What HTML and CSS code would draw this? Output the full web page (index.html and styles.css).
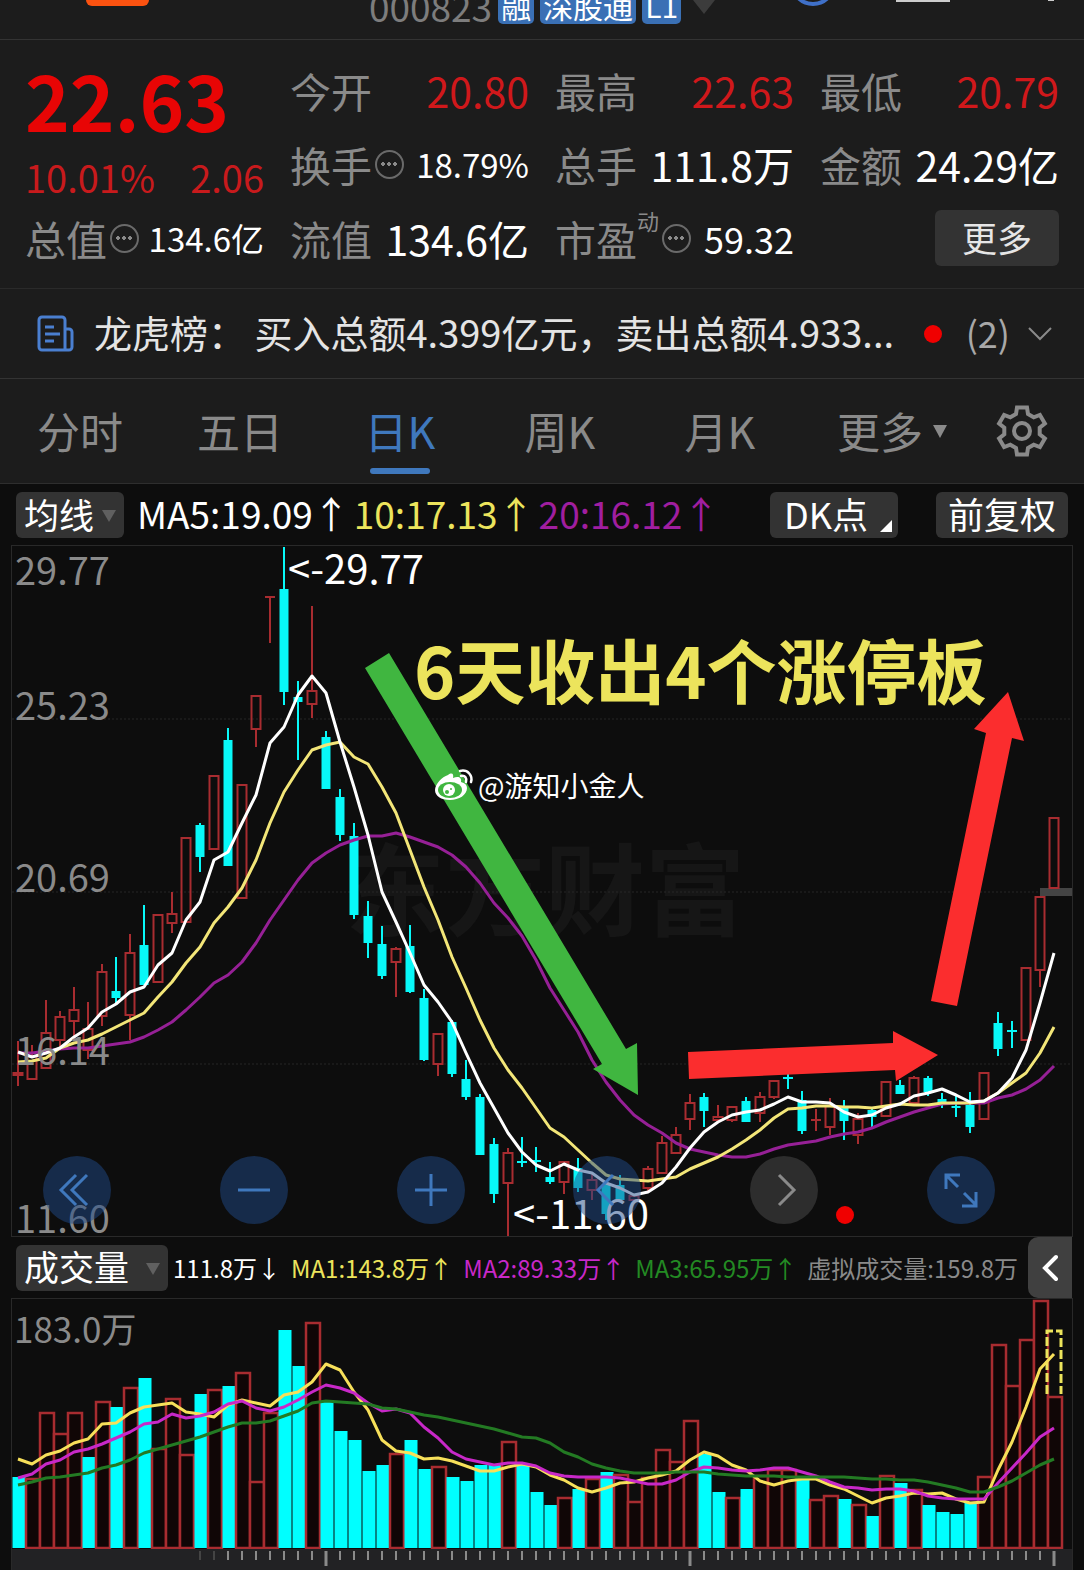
FILE: index.html
```html
<!DOCTYPE html>
<html lang="zh-CN">
<head>
    <meta charset="UTF-8">
    <meta name="viewport" content="width=device-width, initial-scale=1.0">
    <title>000823 日K</title>
    <link rel="stylesheet" href="styles.css">
</head>
<body>
    <!-- Title bar -->
    <header class="topbar">
        <div class="topbar-left"><span class="app-mark"></span></div>
        <div class="stock-code">
            <span>000823</span>
            <span class="tag">融</span>
            <span class="tag">深股通</span>
            <span class="tag">L1</span>
            <span class="code-arrow"></span>
        </div>
        <div class="topbar-right">
            <span class="ring"></span>
            <span class="bar"></span>
            <span class="tip"></span>
        </div>
    </header>

    <!-- Quote -->
    <section class="quote">
        <div class="price-box">
            <div class="price">22.63</div>
            <div class="change"><span>10.01%</span><span>2.06</span></div>
        </div>
        <div class="cell"><span class="label">今开</span><span class="up">20.80</span></div>
        <div class="cell"><span class="label">最高</span><span class="up">22.63</span></div>
        <div class="cell"><span class="label">最低</span><span class="up">20.79</span></div>
        <div class="cell"><span class="label">换手<i class="info"></i></span><span class="small">18.79%</span></div>
        <div class="cell"><span class="label">总手</span><span>111.8万</span></div>
        <div class="cell"><span class="label">金额</span><span>24.29亿</span></div>
        <div class="cell"><span class="label">总值<i class="info"></i></span><span class="small">134.6亿</span></div>
        <div class="cell"><span class="label">流值</span><span>134.6亿</span></div>
        <div class="cell"><span class="label">市盈<sup>动</sup><i class="info"></i></span><span class="medium">59.32</span></div>
        <div class="cell cell-end"><button class="more-btn">更多</button></div>
    </section>

    <!-- News line -->
    <section class="news">
        <svg class="news-icon" viewBox="0 0 38 38" fill="none" stroke="#4a7fd0" stroke-width="3">
            <path d="M29 35H6a3 3 0 0 1-3-3V5a3 3 0 0 1 3-3h20a3 3 0 0 1 3 3v30h4a3 3 0 0 0 3-3V17a3 3 0 0 0-3-3h-4" />
            <path d="M9 12h9M9 19h15M9 26h9" />
        </svg>
        <span class="news-text">龙虎榜： 买入总额4.399亿元，卖出总额4.933...</span>
        <span class="news-dot"></span>
        <span class="news-count">(2)</span>
        <svg class="news-chevron" viewBox="0 0 24 14" fill="none" stroke="#8a8a8a" stroke-width="2">
            <path d="M1 1l11 11L23 1" />
        </svg>
    </section>

    <!-- Period tabs -->
    <nav class="tabs">
        <button class="tab">分时</button>
        <button class="tab">五日</button>
        <button class="tab active">日K</button>
        <button class="tab">周K</button>
        <button class="tab">月K</button>
        <span class="tab tab-more">
            <select aria-label="更多周期"><option>更多</option></select>
        </span>
        <button class="gear" aria-label="设置">
            <svg viewBox="0 0 52 52" fill="none" stroke="#8a8a8a" stroke-width="4">
                <path d="M20 9L21 2.500H31L32 9 37.700 12.300 43.900 9.900 48.900 18.600 43.700 22.700V29.300L48.900 33.400 43.900 42.100 37.700 39.700 32 43 31 49.500H21L20 43 14.300 39.700 8.100 42.100 3.100 33.400 8.300 29.300V22.700L3.100 18.600 8.100 9.900 14.300 12.300Z" />
                <circle cx="26" cy="26" r="8" />
            </svg>
        </button>
    </nav>

    <main class="charts">
        <div class="ma-row">
            <span class="picker picker-ma">
                <select aria-label="主图指标"><option>均线</option></select>
            </span>
            <div class="ma-values">
                <span>MA5:19.09↑</span>
                <span class="yellow">10:17.13↑</span>
                <span class="purple">20:16.12↑</span>
            </div>
            <button class="chip dk">DK点</button>
            <button class="chip">前复权</button>
        </div>

        <div class="panel">
            <svg id="kline" class="chart" viewBox="12 546 1060 690">
                <text class="watermark" x="545" y="928" text-anchor="middle">东方财富</text>
                <g class="grid">
                    <path d="M12 719H1072M12 892H1072M12 1064H1072" />
                </g>
                <rect x="1040" y="888" width="32" height="8" fill="#444" />
                <g id="candles"></g>
                <g id="maLines"></g>
                <g class="axis">
                    <text x="15" y="585">29.77</text>
                    <text x="15" y="720">25.23</text>
                    <text x="15" y="892">20.69</text>
                    <text x="15" y="1065">16.14</text>
                    <text x="15" y="1233">11.60</text>
                </g>
                <g class="extreme">
                    <text x="288" y="584">&lt;-29.77</text>
                    <text x="513" y="1229">&lt;-11.60</text>
                </g>
                <!-- trend arrows -->
                <path fill="#40b640" d="M365 668L389 653 626 1049 637 1043 638 1095 593 1069 602 1064Z" />
                <path fill="#fb2d2e" d="M688 1052L893 1043V1031L938 1055 896 1081 895 1070 689 1079Z" />
                <path fill="#fb2d2e" d="M931 1001L986 733 974 729 1008 692 1024 741 1012 738 957 1006Z" />
                <text class="headline" x="414" y="699">6天收出4个涨停板</text>
                <!-- account mark -->
                <g transform="translate(435 768)">
                    <path fill="#fff" d="M13 7c4-3 6-1 5 3 5-2 9-1 8 4 4 1 6 3 6 6 0 7-8 12-17 12C6 32 0 28 0 22 0 16 7 9 13 7z" />
                    <ellipse cx="15" cy="22" rx="12" ry="8" fill="#40b640" />
                    <circle cx="14" cy="22" r="6" fill="#fff" />
                    <circle cx="12" cy="24" r="2" fill="#40b640" />
                    <circle cx="16" cy="21" r="1" fill="#40b640" />
                    <path fill="none" stroke="#fff" stroke-width="2.5" stroke-linecap="round" d="M26 8c4-1 6 2 5 6M25 3c8-2 13 5 11 11" />
                </g>
                <text class="account" x="478" y="797">@游知小金人</text>
            </svg>

            <div class="toolbar">
                <button class="round" aria-label="最左"><svg viewBox="0 0 68 68"><path d="M33 19L18 34l15 15M44 19L29 34l15 15" /></svg></button>
                <button class="round" aria-label="缩小"><svg viewBox="0 0 68 68"><path d="M18 34h32" /></svg></button>
                <button class="round" aria-label="放大"><svg viewBox="0 0 68 68"><path d="M18 34h32M34 18v32" /></svg></button>
                <button class="round" aria-label="向左"><svg viewBox="0 0 68 68"><path d="M40 19L25 34l15 15" /></svg></button>
                <button class="round grey" aria-label="向右"><svg viewBox="0 0 68 68"><path d="M29 19l15 15-15 15" /></svg><span class="badge"></span></button>
                <button class="round" aria-label="全屏"><svg viewBox="0 0 68 68"><path d="M31 31L19 19M33 19H19v14M37 37l12 12M49 36v14H35" /></svg></button>
            </div>
        </div>

        <div class="vol-row">
            <span class="picker picker-vol">
                <select aria-label="副图指标"><option>成交量</option></select>
            </span>
            <div class="vol-values">
                <span>111.8万↓</span>
                <span class="yellow">MA1:143.8万↑</span>
                <span class="magenta">MA2:89.33万↑</span>
                <span class="green">MA3:65.95万↑</span>
                <span class="grey-text">虚拟成交量:159.8万</span>
            </div>
            <button class="fold" aria-label="收起">
                <svg viewBox="0 0 16 28" fill="none" stroke="#fff" stroke-width="4" stroke-linecap="round"><path d="M14 3L3 14l11 11" /></svg>
            </button>
        </div>

        <div class="panel">
            <svg id="volume" class="chart" viewBox="12 1299 1060 271">
                <g id="bars"></g>
                <path d="M1047 1394V1331H1061V1394" fill="none" stroke="#ece45c" stroke-width="3" stroke-dasharray="9 3" />
                <g id="volLines"></g>
                <g class="axis"><text class="vol-max" x="14" y="1343">183.0万</text></g>
                <rect x="12" y="1549" width="1060" height="21" fill="#222224" />
                <g id="ticks"></g>
            </svg>
        </div>
    </main>

    <script src="script.js"></script>
</body>
</html>
```

FILE: styles.css
```css
* {
    box-sizing: border-box;
}

body {
    margin: 0;
    background-color: #1c1c1c;
    color: #fff;
    font-family: "Noto Sans CJK SC", sans-serif;
}

button,
select {
    margin: 0;
    padding: 0;
    border: none;
    background: none;
    color: inherit;
    font-family: inherit;
    cursor: pointer;
    appearance: none;
}

/* title bar */
.topbar {
    display: grid;
    grid-template-columns: 1fr auto 1fr;
    align-items: end;
    height: 40px;
    overflow: hidden;
    border-bottom: 1px solid #333;
}

.topbar-left {
    display: flex;
    height: 39px;
    padding-left: 86px;
}

.app-mark {
    width: 63px;
    height: 6px;
    border-radius: 0 0 12px 12px;
    background-color: #fb5210;
}

.stock-code {
    display: flex;
    align-items: flex-end;
    gap: 6px;
    height: 39px;
    padding-bottom: 15px;
    color: #7d7d7d;
    font-size: 37px;
    line-height: 36px;
}

.tag {
    padding: 0 3px;
    border-radius: 5px;
    background-color: #3a70b5;
    color: #fff;
    font-size: 30px;
    line-height: 38px;
}

.code-arrow {
    align-self: flex-start;
    margin-left: 6px;
    border: 11px solid transparent;
    border-top: 14px solid #3c3c3c;
    border-bottom: none;
}

.topbar-right {
    display: flex;
    align-items: flex-start;
    justify-content: flex-end;
    height: 39px;
    padding-right: 30px;
    gap: 60px;
}

.ring {
    width: 46px;
    height: 46px;
    margin-top: -40px;
    border: 4px solid #3f70c8;
    border-radius: 50%;
}

.bar {
    width: 54px;
    height: 2px;
    background-color: #ccc;
}

.tip {
    width: 6px;
    height: 1px;
    margin-left: 38px;
    background-color: #ccc;
}

/* quote */
.quote {
    display: grid;
    grid-template-columns: repeat(4, 1fr);
    grid-auto-rows: 74px;
    column-gap: 26px;
    padding: 13px 25px;
    border-bottom: 1px solid #2a2a2a;
    font-size: 41px;
}

.price-box {
    grid-row: span 2;
}

.price {
    color: #e80505;
    font-size: 76px;
    font-weight: 700;
    line-height: 92px;
}

.change {
    display: flex;
    justify-content: space-between;
    color: #c81a1c;
    font-size: 38px;
    line-height: 64px;
}

.cell {
    display: flex;
    align-items: center;
    justify-content: space-between;
    white-space: nowrap;
}

.cell-end {
    justify-content: flex-end;
}

.label {
    display: flex;
    align-items: center;
    color: #8a8a8a;
}

.label sup {
    align-self: flex-start;
    font-size: 22px;
    line-height: 24px;
}

.up {
    color: #d0181b;
}

.small {
    font-size: 33px;
}

.medium {
    font-size: 36px;
}

.info {
    width: 29px;
    height: 29px;
    margin-left: 3px;
    border: 2px solid #6a6a6a;
    border-radius: 50%;
    background:
        radial-gradient(circle at 6px 12px, #8a8a8a 2px, transparent 2px),
        radial-gradient(circle at 12px 12px, #8a8a8a 2px, transparent 2px),
        radial-gradient(circle at 18px 12px, #8a8a8a 2px, transparent 2px);
}

.more-btn {
    width: 124px;
    height: 56px;
    padding-bottom: 3px;
    border-radius: 6px;
    background-color: #333;
    color: #e6e6e6;
    font-size: 35px;
    line-height: 50px;
}

/* news line */
.news {
    display: flex;
    align-items: center;
    height: 90px;
    padding: 0 32px 0 36px;
    border-bottom: 1px solid #333;
    color: #e4e4e4;
    font-size: 38px;
    line-height: 56px;
}

.news-icon {
    flex: none;
    width: 38px;
    height: 38px;
    margin-right: 20px;
}

.news-text {
    flex: 1;
    padding-bottom: 4px;
    overflow: hidden;
    white-space: nowrap;
}

.news-dot {
    flex: none;
    width: 18px;
    height: 18px;
    border-radius: 50%;
    background-color: #f00000;
}

.news-count {
    margin: 0 18px 0 24px;
    padding-bottom: 4px;
    color: #a8a8a8;
    font-size: 36px;
}

.news-chevron {
    flex: none;
    width: 24px;
    height: 14px;
}

/* period tabs */
.tabs {
    display: flex;
    height: 105px;
    border-bottom: 1px solid #2e2e2e;
}

.tab {
    position: relative;
    flex: 1;
    padding-bottom: 2px;
    color: #8a8a8a;
    font-size: 43px;
}

.tab.active {
    color: #3f78bd;
}

.tab.active::after {
    content: "";
    position: absolute;
    bottom: 9px;
    left: 50%;
    width: 60px;
    height: 6px;
    margin-left: -30px;
    border-radius: 3px;
    background-color: #3f78bd;
}

.tab-more select {
    width: 100%;
    height: 100%;
    font-size: 43px;
    text-align: center;
    text-align-last: center;
}

.tab-more::after {
    content: "";
    position: absolute;
    top: 46px;
    right: 13px;
    border: 7px solid transparent;
    border-top: 13px solid #8a8a8a;
    border-bottom: none;
}

.gear {
    flex: none;
    width: 124px;
}

.gear svg {
    display: block;
    width: 52px;
    height: 52px;
    margin: 0 auto;
}

/* indicator rows */
.charts {
    background-color: #0d0d0d;
}

.ma-row {
    display: flex;
    align-items: center;
    height: 62px;
    padding: 0 16px;
}

.picker {
    position: relative;
    flex: none;
    height: 46px;
    border-radius: 6px;
    background-color: #333;
}

/* taller than the chip so the glyph feet are not clipped */
.picker select {
    display: block;
    width: 100%;
    height: 54px;
    margin-top: -6px;
    padding-left: 8px;
    font-size: 35px;
}

.picker::after {
    content: "";
    position: absolute;
    top: 18px;
    right: 8px;
    border: 7px solid transparent;
    border-top: 12px solid #606060;
    border-bottom: none;
    pointer-events: none;
}

.picker-ma {
    width: 108px;
}

.picker-vol {
    width: 152px;
}

.ma-values {
    display: flex;
    flex: 1;
    gap: 4px;
    padding: 0 0 4px 13px;
    font-size: 37px;
    line-height: 54px;
    white-space: nowrap;
}

.chip {
    position: relative;
    height: 46px;
    padding: 0 12px 4px;
    border-radius: 6px;
    background-color: #333;
    font-size: 36px;
    line-height: 42px;
}

.dk {
    margin-right: 38px;
    padding: 0 30px 4px 14px;
}

.dk::after {
    content: "";
    position: absolute;
    right: 6px;
    bottom: 6px;
    border-left: 12px solid transparent;
    border-bottom: 12px solid #fff;
}

.yellow {
    color: #ece45c;
}

.purple {
    color: #a01ea0;
}

.magenta {
    color: #c828c8;
}

.green {
    color: #238a23;
}

.grey-text {
    color: #8a8a8a;
}

.vol-row {
    display: flex;
    align-items: center;
    height: 63px;
    padding: 0 12px 0 16px;
}

.vol-values {
    display: flex;
    flex: 1;
    justify-content: space-between;
    padding: 0 10px 0 5px;
    font-size: 24px;
    white-space: nowrap;
}

.fold {
    flex: none;
    width: 44px;
    height: 61px;
    border-radius: 10px 0 0 10px;
    background-color: #404040;
}

.fold svg {
    display: block;
    width: 16px;
    height: 28px;
    margin: 0 auto;
}

/* charts */
.panel {
    position: relative;
    margin: 0 12px;
    outline: 1px solid #292929;
}

.chart {
    display: block;
    width: 100%;
    height: auto;
}

.grid path {
    fill: none;
    stroke: #262626;
    stroke-dasharray: 2 2;
}

.watermark {
    fill: #161616;
    font-size: 100px;
    font-weight: 700;
}

.axis text {
    fill: #8a8a8a;
    font-size: 38px;
}

.axis .vol-max {
    font-size: 35px;
}

.extreme text {
    fill: #fff;
    font-size: 40px;
}

.headline {
    fill: #ece45c;
    font-size: 70px;
    font-weight: 700;
}

.account {
    fill: #fff;
    font-size: 28px;
}

.toolbar {
    position: absolute;
    right: 77px;
    bottom: 12px;
    left: 31px;
    display: flex;
    justify-content: space-between;
}

.round {
    position: relative;
    width: 68px;
    height: 68px;
    border-radius: 50%;
    background-color: rgba(31, 73, 135, 0.5);
}

.round svg {
    display: block;
    fill: none;
    stroke: #3f78bd;
    stroke-width: 3;
}

.round.grey {
    background-color: #2d2d2d;
}

.round.grey svg {
    stroke: #8a8a8a;
}

.badge {
    position: absolute;
    right: -36px;
    bottom: 0;
    width: 18px;
    height: 18px;
    border-radius: 50%;
    background-color: #f00000;
}
```

FILE: script.js
```js
const RED = '#a82c30';
const CYAN = '#08f8f8';
const STEP = 14;
const FIRST_X = 18;

// [colour, high, body top, body bottom, low] for each day
const candles = [
    ['r', 1041, 1072, 1075, 1086], ['r', 1045, 1055, 1079, 1079], ['r', 1000, 1032, 1068, 1068],
    ['r', 1011, 1016, 1040, 1046], ['r', 987, 1009, 1021, 1040], ['r', 1002, 1028, 1050, 1059],
    ['r', 964, 971, 1016, 1026], ['c', 957, 991, 998, 1003], ['r', 934, 952, 1015, 1040],
    ['c', 905, 945, 985, 985], ['r', 914, 914, 982, 982], ['r', 892, 913, 923, 933],
    ['r', 837, 837, 922, 922], ['c', 823, 825, 857, 872], ['r', 775, 775, 849, 849],
    ['c', 728, 740, 866, 866], ['r', 784, 784, 898, 898], ['r', 695, 695, 729, 747],
    ['r', 597, 597, 597, 643], ['c', 547, 589, 692, 705], ['c', 681, 697, 702, 760],
    ['r', 606, 690, 704, 718], ['c', 731, 737, 789, 789], ['c', 789, 797, 835, 841],
    ['c', 823, 836, 915, 919], ['c', 901, 916, 943, 958], ['c', 926, 944, 976, 979],
    ['r', 947, 948, 962, 997], ['c', 925, 946, 992, 993], ['c', 989, 998, 1060, 1061],
    ['r', 1033, 1033, 1064, 1076], ['c', 1020, 1022, 1074, 1077], ['c', 1060, 1079, 1097, 1100],
    ['c', 1094, 1097, 1155, 1155], ['c', 1138, 1144, 1194, 1203], ['r', 1148, 1152, 1183, 1237],
    ['c', 1137, 1162, 1162, 1167], ['c', 1147, 1161, 1161, 1172], ['c', 1162, 1177, 1182, 1184],
    ['r', 1161, 1161, 1182, 1194], ['c', 1158, 1168, 1188, 1192], ['r', 1172, 1179, 1190, 1200],
    ['c', 1183, 1185, 1214, 1220], ['c', 1175, 1185, 1200, 1200], ['r', 1195, 1195, 1200, 1200],
    ['r', 1166, 1168, 1188, 1192], ['r', 1136, 1142, 1173, 1173], ['r', 1127, 1134, 1153, 1153],
    ['r', 1094, 1102, 1119, 1130], ['c', 1093, 1097, 1111, 1127], ['r', 1105, 1116, 1120, 1123],
    ['r', 1106, 1106, 1120, 1122], ['c', 1097, 1101, 1122, 1122], ['r', 1092, 1096, 1113, 1122],
    ['r', 1080, 1080, 1097, 1099], ['c', 1074, 1078, 1078, 1089], ['c', 1091, 1100, 1131, 1134],
    ['r', 1109, 1120, 1120, 1131], ['r', 1098, 1105, 1127, 1135], ['c', 1100, 1107, 1121, 1140],
    ['r', 1113, 1118, 1135, 1144], ['c', 1108, 1110, 1117, 1127], ['r', 1081, 1081, 1116, 1116],
    ['c', 1080, 1085, 1094, 1094], ['r', 1076, 1077, 1103, 1103], ['c', 1076, 1078, 1092, 1096],
    ['c', 1093, 1099, 1103, 1108], ['c', 1096, 1106, 1108, 1117], ['c', 1092, 1105, 1127, 1133],
    ['r', 1072, 1072, 1119, 1119], ['c', 1012, 1023, 1049, 1056], ['c', 1021, 1031, 1031, 1048],
    ['r', 967, 967, 1040, 1040], ['r', 896, 896, 970, 987], ['r', 817, 817, 888, 888]
];

const ma5 = [1052, 1057, 1053, 1048, 1037, 1028, 1012, 1004, 992, 987, 965, 953, 920, 902, 860, 852, 823, 795, 743, 727, 695, 676, 693, 742, 787, 835, 892, 922, 953, 985, 1002, 1022, 1053, 1083, 1108, 1133, 1152, 1165, 1171, 1164, 1170, 1173, 1183, 1188, 1195, 1192, 1183, 1167, 1148, 1132, 1122, 1115, 1112, 1110, 1104, 1097, 1102, 1102, 1103, 1112, 1117, 1115, 1108, 1104, 1096, 1093, 1089, 1095, 1102, 1101, 1093, 1078, 1050, 1003, 953];
const ma10 = [1062, 1061, 1058, 1048, 1043, 1040, 1034, 1027, 1020, 1013, 997, 982, 963, 947, 923, 907, 888, 860, 823, 792, 770, 750, 745, 742, 757, 764, 787, 813, 850, 887, 920, 957, 988, 1020, 1048, 1070, 1088, 1108, 1128, 1137, 1150, 1163, 1175, 1179, 1180, 1181, 1179, 1177, 1169, 1163, 1157, 1149, 1140, 1130, 1118, 1109, 1108, 1106, 1106, 1107, 1107, 1108, 1106, 1104, 1105, 1105, 1103, 1103, 1103, 1101, 1093, 1083, 1073, 1053, 1027];
const ma20 = [1053, 1053, 1051, 1049, 1048, 1048, 1046, 1044, 1042, 1037, 1030, 1022, 1010, 997, 983, 975, 962, 943, 920, 900, 880, 863, 853, 845, 840, 836, 836, 833, 837, 842, 847, 855, 867, 883, 903, 918, 936, 960, 988, 1010, 1032, 1060, 1082, 1100, 1115, 1125, 1133, 1143, 1149, 1152, 1155, 1157, 1157, 1154, 1149, 1145, 1143, 1141, 1137, 1134, 1132, 1128, 1122, 1117, 1112, 1108, 1104, 1103, 1103, 1103, 1098, 1095, 1089, 1080, 1066];

const volumeTop = [1477, 1478, 1412, 1433, 1412, 1457, 1401, 1407, 1387, 1378, 1448, 1398, 1454, 1394, 1389, 1386, 1372, 1481, 1412, 1330, 1366, 1322, 1402, 1431, 1440, 1471, 1465, 1453, 1440, 1469, 1466, 1477, 1481, 1465, 1465, 1441, 1464, 1492, 1505, 1497, 1489, 1478, 1472, 1474, 1501, 1477, 1449, 1461, 1420, 1454, 1492, 1497, 1489, 1475, 1469, 1469, 1479, 1499, 1495, 1499, 1504, 1516, 1475, 1483, 1489, 1505, 1512, 1514, 1503, 1476, 1344, 1385, 1339, 1300, 1396];
const volumeColor = 'crrrrcrcrcrrrcrcrrrccrcccccrccrccccrcccrcrcrrrrrrccrcrrrcrrcrcrcrccccrrrrrr';
const vol5 = [1459, 1464, 1455, 1451, 1443, 1439, 1424, 1423, 1413, 1407, 1405, 1403, 1412, 1414, 1417, 1405, 1400, 1403, 1406, 1395, 1392, 1382, 1364, 1370, 1392, 1410, 1440, 1451, 1453, 1459, 1458, 1461, 1466, 1471, 1471, 1467, 1464, 1467, 1475, 1480, 1488, 1492, 1488, 1483, 1482, 1478, 1475, 1471, 1460, 1452, 1456, 1465, 1470, 1481, 1485, 1481, 1479, 1479, 1485, 1489, 1496, 1503, 1498, 1496, 1493, 1494, 1493, 1499, 1503, 1502, 1470, 1442, 1407, 1369, 1354];
const vol10 = [1478, 1474, 1464, 1460, 1452, 1449, 1444, 1438, 1432, 1424, 1422, 1414, 1418, 1416, 1412, 1404, 1401, 1408, 1411, 1407, 1400, 1392, 1385, 1388, 1393, 1403, 1411, 1409, 1413, 1427, 1438, 1452, 1459, 1462, 1465, 1463, 1463, 1466, 1473, 1476, 1477, 1477, 1477, 1478, 1481, 1484, 1484, 1480, 1472, 1467, 1468, 1470, 1471, 1470, 1468, 1468, 1472, 1476, 1482, 1487, 1488, 1490, 1489, 1489, 1491, 1496, 1498, 1499, 1499, 1499, 1483, 1468, 1453, 1437, 1428];
const vol20 = [1485, 1482, 1478, 1477, 1475, 1473, 1468, 1465, 1460, 1453, 1449, 1445, 1441, 1437, 1432, 1427, 1423, 1423, 1421, 1416, 1411, 1403, 1401, 1402, 1403, 1404, 1408, 1409, 1412, 1415, 1417, 1420, 1423, 1426, 1429, 1433, 1437, 1438, 1443, 1452, 1457, 1464, 1468, 1471, 1473, 1473, 1473, 1472, 1472, 1472, 1474, 1475, 1476, 1476, 1476, 1477, 1477, 1477, 1477, 1477, 1478, 1479, 1479, 1480, 1480, 1482, 1485, 1488, 1492, 1492, 1487, 1481, 1473, 1465, 1459];

function add(parentId, name, attrs) {
    const el = document.createElementNS('http://www.w3.org/2000/svg', name);
    for (const key in attrs) {
        el.setAttribute(key, attrs[key]);
    }
    document.getElementById(parentId).appendChild(el);
}

function wick(x, y1, y2, color) {
    if (y2 > y1) {
        add('candles', 'path', { d: `M${x} ${y1}V${y2}`, stroke: color, 'stroke-width': 2 });
    }
}

function drawLine(parentId, values, color, width) {
    const points = values.map((y, i) => `${FIRST_X + i * STEP},${y}`).join(' ');
    add(parentId, 'polyline', { points, fill: 'none', stroke: color, 'stroke-width': width, 'stroke-linejoin': 'round' });
}

candles.forEach(([type, high, top, bottom, low], i) => {
    const x = FIRST_X + i * STEP;
    const color = type === 'r' ? RED : CYAN;
    wick(x, high, top, color);
    wick(x, bottom, low, color);
    if (bottom - top < 2) {
        add('candles', 'path', { d: `M${x - 5} ${top}H${x + 5}`, stroke: color, 'stroke-width': 2 });
    } else if (type === 'r') {
        add('candles', 'rect', { x: x - 4.5, y: top + 1, width: 9, height: bottom - top - 1, fill: 'none', stroke: color, 'stroke-width': 2 });
    } else {
        add('candles', 'rect', { x: x - 4.5, y: top, width: 9, height: bottom - top, fill: color });
    }
});

drawLine('maLines', ma20, '#962096', 3);
drawLine('maLines', ma10, '#f3e678', 3);
drawLine('maLines', ma5, '#fff', 3);

volumeTop.forEach((top, i) => {
    const x = 12 + i * STEP;
    if (volumeColor[i] === 'r') {
        add('bars', 'rect', { x: x, y: top + 1, width: STEP, height: 1547 - top, fill: '#100606', stroke: RED, 'stroke-width': 2.5 });
    } else {
        add('bars', 'rect', { x: x + 0.5, y: top, width: STEP - 1, height: 1548 - top, fill: '#00ffff' });
    }
});

drawLine('volLines', vol5, '#f7e05a', 3);
drawLine('volLines', vol10, '#c828c8', 3);
drawLine('volLines', vol20, '#237a23', 3);

// date ticks, one per day, longer at the month start
for (let i = 13; i < 75; i++) {
    const month = (i - 22) % 26 === 0;
    add('ticks', 'path', {
        d: `M${FIRST_X + i * STEP} 1551V${month ? 1566 : 1560}`,
        stroke: i < 15 ? '#444' : '#8a8a8a',
        'stroke-width': month ? 3 : 2
    });
}
```
